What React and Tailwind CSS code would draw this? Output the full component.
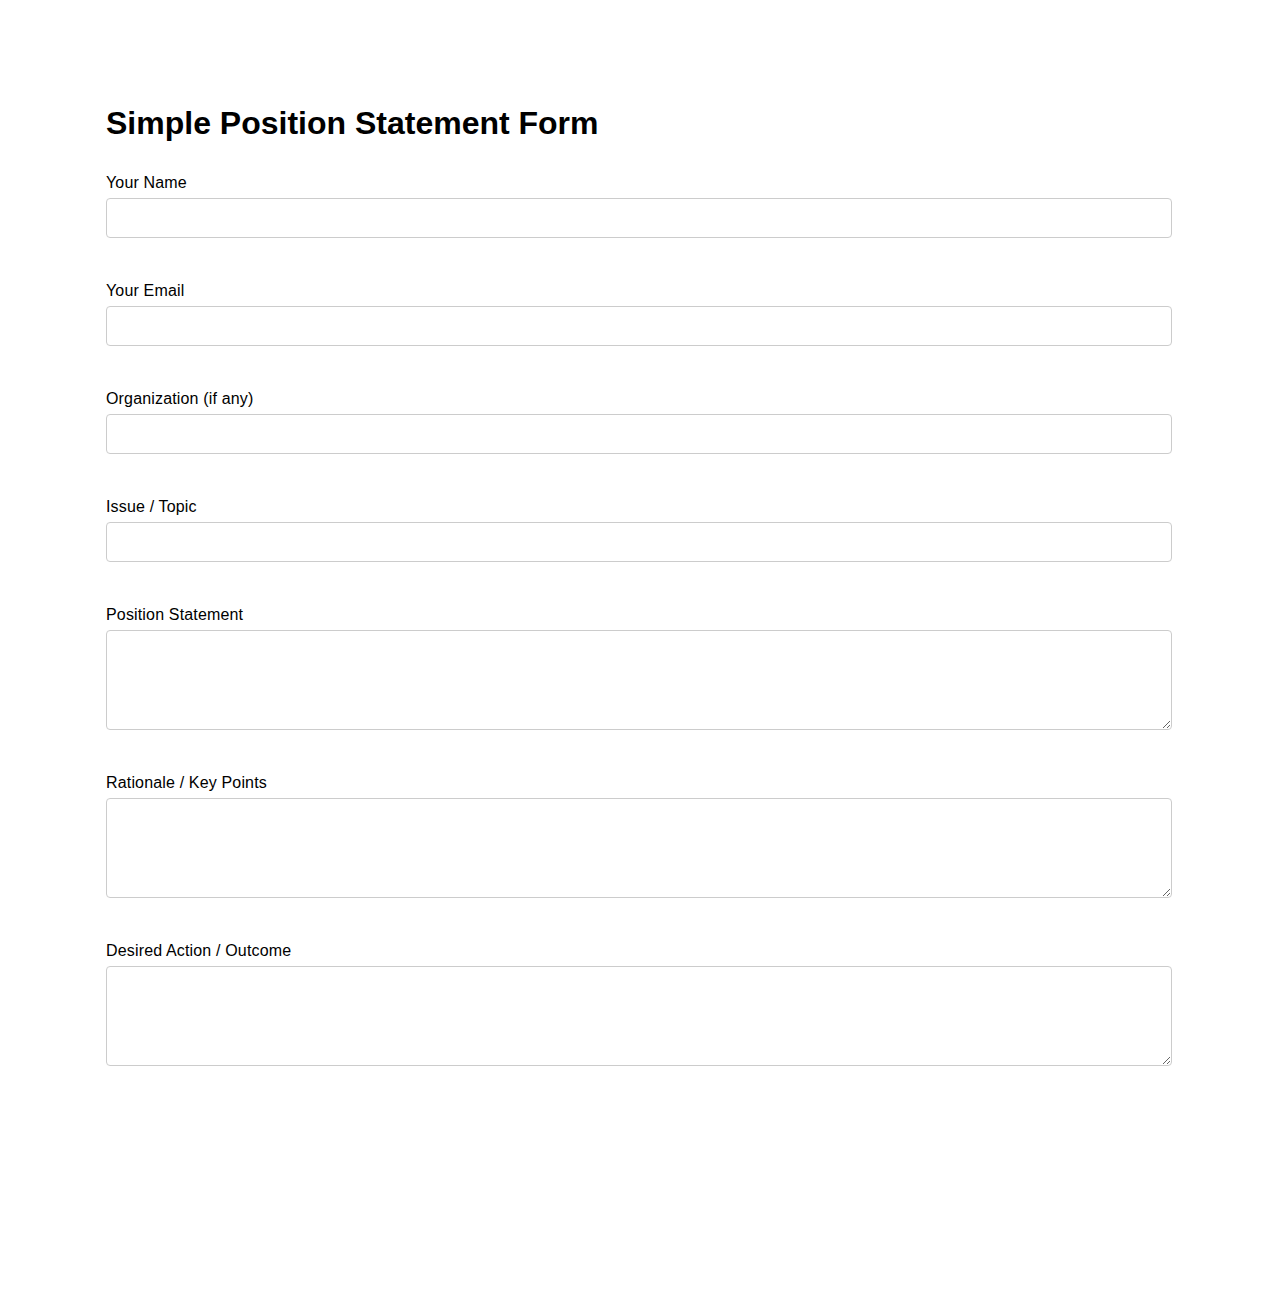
const fields = [
  { label: 'Your Name', type: 'input' },
  { label: 'Your Email', type: 'input' },
  { label: 'Organization (if any)', type: 'input' },
  { label: 'Issue / Topic', type: 'input' },
  { label: 'Position Statement', type: 'textarea' },
  { label: 'Rationale / Key Points', type: 'textarea' },
  { label: 'Desired Action / Outcome', type: 'textarea' },
]

export default function App() {
  return (
    <div className="min-h-[1300px] bg-white text-black" style={{ fontFamily: '"Liberation Sans", Arial, sans-serif' }}>
      <div className="w-[1066px] mx-auto pt-[105px]">
        <h1 className="text-[32px] leading-[37px] font-bold mb-[32px]">Simple Position Statement Form</h1>
        {fields.map((f) => (
          <div key={f.label} className="mb-[44px]">
            <label className="block text-[16px] leading-[18px] tracking-[0.16px] mb-[6px]">{f.label}</label>
            {f.type === 'input' ? (
              <input type="text" className="block w-full h-[40px] border border-[#ccc] rounded-[4px] px-2 outline-none" />
            ) : (
              <textarea className="block w-full h-[100px] border border-[#ccc] rounded-[4px] px-2 py-2 outline-none" />
            )}
          </div>
        ))}
      </div>
    </div>
  )
}
